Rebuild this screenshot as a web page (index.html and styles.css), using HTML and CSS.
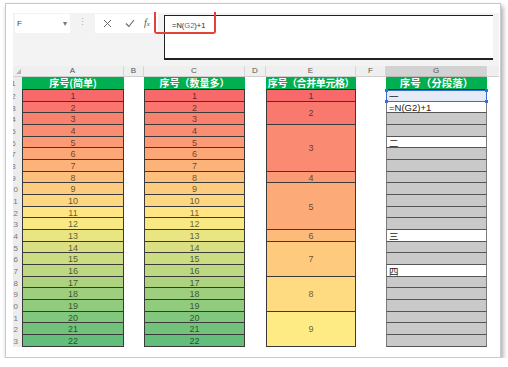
FILE: index.html
```html
<!DOCTYPE html>
<html lang="zh-CN">
<head>
    <meta charset="UTF-8">
    <title>序号</title>
    <link rel="stylesheet" href="styles.css">
</head>
<body>
<div class="frame">
    <div class="toolbar">
        <div class="name-box"><span>F</span><span class="drop">▾</span></div>
        <div class="grip">⋮</div>
        <div class="fx-box">
            <svg class="btn" width="9" height="9" viewBox="0 0 9 9"><path d="M1 1 L8 8 M8 1 L1 8" stroke="#666" stroke-width="1" fill="none"/></svg>
            <svg class="btn" width="10" height="9" viewBox="0 0 10 9"><path d="M1 4.5 L3.8 7.5 L9 1" stroke="#666" stroke-width="1.1" fill="none"/></svg>
            <span class="fx">f<span class="x">x</span></span>
        </div>
        <div class="formula">=N(<span class="ref">G2</span>)+1</div>
        <div class="mark"></div>
    </div>

    <div class="sheet">
        <div class="col rowhdr">
            <div class="hdr corner"><span class="tri"></span></div>
            <div class="rh first"><span>1</span></div>
            <div class="rh"><span>2</span></div>
            <div class="rh"><span>3</span></div>
            <div class="rh"><span>4</span></div>
            <div class="rh"><span>5</span></div>
            <div class="rh"><span>6</span></div>
            <div class="rh"><span>7</span></div>
            <div class="rh"><span>8</span></div>
            <div class="rh"><span>9</span></div>
            <div class="rh"><span>10</span></div>
            <div class="rh"><span>11</span></div>
            <div class="rh"><span>12</span></div>
            <div class="rh"><span>13</span></div>
            <div class="rh"><span>14</span></div>
            <div class="rh"><span>15</span></div>
            <div class="rh"><span>16</span></div>
            <div class="rh"><span>17</span></div>
            <div class="rh"><span>18</span></div>
            <div class="rh"><span>19</span></div>
            <div class="rh"><span>20</span></div>
            <div class="rh"><span>21</span></div>
            <div class="rh"><span>22</span></div>
            <div class="rh"><span>23</span></div>
        </div>

        <div class="col col-a">
            <div class="hdr">A</div>
            <div class="title">序号(简单)</div>
            <div class="c" style="background:#f8696b">1</div>
            <div class="c" style="background:#f9756d">2</div>
            <div class="c" style="background:#f9826f">3</div>
            <div class="c" style="background:#fa8e72">4</div>
            <div class="c" style="background:#fb9a74">5</div>
            <div class="c" style="background:#fba777">6</div>
            <div class="c" style="background:#fcb379">7</div>
            <div class="c" style="background:#fdc07c">8</div>
            <div class="c" style="background:#fdcc7e">9</div>
            <div class="c" style="background:#fed880">10</div>
            <div class="c" style="background:#ffe583">11</div>
            <div class="c" style="background:#f8e983">12</div>
            <div class="c" style="background:#e9e583">13</div>
            <div class="c" style="background:#dae082">14</div>
            <div class="c" style="background:#cbdc81">15</div>
            <div class="c" style="background:#bcd880">16</div>
            <div class="c" style="background:#add37f">17</div>
            <div class="c" style="background:#9ecf7e">18</div>
            <div class="c" style="background:#90cb7e">19</div>
            <div class="c" style="background:#81c77d">20</div>
            <div class="c" style="background:#72c27c">21</div>
            <div class="c" style="background:#63be7b">22</div>
        </div>

        <div class="col col-b">
            <div class="hdr">B</div>
        </div>

        <div class="col col-c">
            <div class="hdr">C</div>
            <div class="title">序号（数量多）</div>
            <div class="c" style="background:#f8696b">1</div>
            <div class="c" style="background:#f9756d">2</div>
            <div class="c" style="background:#f9826f">3</div>
            <div class="c" style="background:#fa8e72">4</div>
            <div class="c" style="background:#fb9a74">5</div>
            <div class="c" style="background:#fba777">6</div>
            <div class="c" style="background:#fcb379">7</div>
            <div class="c" style="background:#fdc07c">8</div>
            <div class="c" style="background:#fdcc7e">9</div>
            <div class="c" style="background:#fed880">10</div>
            <div class="c" style="background:#ffe583">11</div>
            <div class="c" style="background:#f8e983">12</div>
            <div class="c" style="background:#e9e583">13</div>
            <div class="c" style="background:#dae082">14</div>
            <div class="c" style="background:#cbdc81">15</div>
            <div class="c" style="background:#bcd880">16</div>
            <div class="c" style="background:#add37f">17</div>
            <div class="c" style="background:#9ecf7e">18</div>
            <div class="c" style="background:#90cb7e">19</div>
            <div class="c" style="background:#81c77d">20</div>
            <div class="c" style="background:#72c27c">21</div>
            <div class="c" style="background:#63be7b">22</div>
        </div>

        <div class="col col-d">
            <div class="hdr">D</div>
        </div>

        <div class="col col-e">
            <div class="hdr">E</div>
            <div class="title">序号（合并单元格）</div>
            <div class="c" style="background:#f8696b">1</div>
            <div class="c r2" style="background:#f9796e">2</div>
            <div class="c r4" style="background:#fa8a71">3</div>
            <div class="c" style="background:#fb9a74">4</div>
            <div class="c r4" style="background:#fcaa78">5</div>
            <div class="c" style="background:#fcba7b">6</div>
            <div class="c r3" style="background:#fdca7e">7</div>
            <div class="c r3" style="background:#fedb81">8</div>
            <div class="c r3" style="background:#ffeb84">9</div>
        </div>

        <div class="col col-f">
            <div class="hdr">F</div>
        </div>

        <div class="col col-g">
            <div class="hdr sel">G</div>
            <div class="title">序号（分段落）</div>
            <div class="c txt active">一<i class="h tl"></i><i class="h tr"></i><i class="h bl"></i><i class="h br"></i></div>
            <div class="c txt white">=N(G2)+1</div>
            <div class="c gray"></div>
            <div class="c gray"></div>
            <div class="c txt white">二</div>
            <div class="c gray"></div>
            <div class="c gray"></div>
            <div class="c gray"></div>
            <div class="c gray"></div>
            <div class="c gray"></div>
            <div class="c gray"></div>
            <div class="c gray"></div>
            <div class="c txt white">三</div>
            <div class="c gray"></div>
            <div class="c gray"></div>
            <div class="c txt white">四</div>
            <div class="c gray"></div>
            <div class="c gray"></div>
            <div class="c gray"></div>
            <div class="c gray"></div>
            <div class="c gray"></div>
            <div class="c gray"></div>
        </div>

        <div class="col col-rest">
            <div class="hdr"></div>
        </div>
    </div>
</div>
</body>
</html>
```

FILE: styles.css
```css
:root {
    --row: 11.68px;
}
body {
    margin: 0;
    background: #fff;
    font-family: "Liberation Sans", "Noto Sans CJK SC", sans-serif;
    color: #222;
}
.frame {
    margin: 3px 0 0 5px;
    width: 496px;
    height: 355px;
    box-sizing: border-box;
    border: 1px solid #c9c9c9;
    box-shadow: 2px 3px 5px rgba(0, 0, 0, 0.35);
    padding: 9px 1px 0 7px;
    background: #fff;
}

/* toolbar / formula bar */
.toolbar {
    position: relative;
    display: flex;
    align-items: flex-start;
    height: 53px;
    background: #f3f3f3;
}
.name-box {
    display: flex;
    align-items: center;
    justify-content: space-between;
    margin: 1px 0 0 2px;
    width: 55px;
    height: 19px;
    box-sizing: border-box;
    padding: 0 3px 0 2px;
    background: #fff;
    font-size: 8px;
    color: #444;
}
.name-box .drop {
    font-size: 8px;
    color: #777;
}
.grip {
    margin: 5px 0 0 8px;
    font-size: 9px;
    line-height: 9px;
    color: #aaa;
}
.fx-box {
    display: flex;
    align-items: center;
    margin: 1px 0 0 8px;
    width: 63px;
    height: 19px;
    background: #fff;
}
.fx-box .btn {
    margin-left: 8px;
}
.fx-box .btn + .btn {
    margin-left: 13px;
}
.fx {
    margin-left: 9px;
    font-family: "Liberation Serif", serif;
    font-style: italic;
    font-size: 10px;
    line-height: 10px;
    color: #555;
}
.fx .x {
    font-size: 7px;
}
.formula {
    flex: 1;
    margin: 2px 6px 0 6px;
    height: 45px;
    box-sizing: border-box;
    border-top: 1px solid #222;
    border-bottom: 2px solid #222;
    border-left: 1px solid #222;
    padding: 5px 0 0 7px;
    background: #fff;
    font-size: 7.5px;
    color: #222;
}
.formula .ref {
    color: #3a6fd0;
}
.mark {
    position: absolute;
    left: 141px;
    top: -1px;
    width: 62px;
    height: 22px;
    box-sizing: border-box;
    border: 2px solid #e5413b;
    border-top: none;
    border-radius: 0 0 3px 3px;
}

/* sheet */
.sheet {
    display: flex;
}
.col {
    display: flex;
    flex-direction: column;
}
.rowhdr { width: 9px; }
.col-a { width: 102px; }
.col-b { width: 20px; }
.col-c { width: 101px; }
.col-d { width: 21px; }
.col-e { width: 90px; }
.col-f { width: 30px; }
.col-g { width: 101px; }
.col-rest { flex: 1; }

.hdr {
    height: 11px;
    box-sizing: border-box;
    background: #efefef;
    border-right: 1px solid #d6d6d6;
    border-bottom: 1px solid #cfcfcf;
    font-size: 8px;
    line-height: 10px;
    text-align: center;
    color: #555;
}
.hdr.sel {
    background: #d2d2d2;
    border-bottom-color: #b9b9b9;
}
.col-rest .hdr {
    border-right: none;
}
.corner {
    position: relative;
    border-right: none;
}
.tri {
    position: absolute;
    right: 1px;
    bottom: 2px;
    width: 0;
    height: 0;
    border-left: 5px solid transparent;
    border-bottom: 5px solid #b5b5b5;
}
.rh {
    height: var(--row);
    overflow: hidden;
    background: #ececec;
    font-size: 8px;
    color: #777;
}
.rh.first {
    height: 13px;
}
.rh span {
    display: block;
    width: 20px;
    margin-left: -9.5px;
    text-align: center;
    line-height: 13px;
}

.title {
    height: 13px;
    box-sizing: border-box;
    background: #00b050;
    border-bottom: 1px solid #2e2e2e;
    color: #fff;
    font-family: "Noto Sans CJK SC", sans-serif;
    font-weight: bold;
    font-size: 10px;
    line-height: 12px;
    text-align: center;
    white-space: nowrap;
    overflow: hidden;
}
.col-e .title {
    letter-spacing: -0.4px;
}
.col-g .title {
    font-size: 10.5px;
}

.c {
    display: flex;
    align-items: center;
    justify-content: center;
    height: var(--row);
    box-sizing: border-box;
    padding-top: 1px;
    border-left: 1px solid #3a3a3a;
    border-right: 1px solid #3a3a3a;
    border-bottom: 1px solid #3a3a3a;
    font-size: 9px;
    color: rgba(0, 0, 0, 0.62);
}
.r2 { height: calc(var(--row) * 2); }
.r3 { height: calc(var(--row) * 3); }
.r4 { height: calc(var(--row) * 4); }

.col-g .c {
    border-left-color: #7a7a7a;
    border-right-color: #7a7a7a;
    border-bottom-color: #555;
}
.c.gray {
    background: #c9c9c9;
}
.c.white {
    background: #fff;
}
.c.txt {
    justify-content: flex-start;
    padding-left: 2px;
    font-size: 9.5px;
    color: #222;
}
.c.active {
    position: relative;
    background: #e4ebf7;
    border: 1px solid #3a6fd0;
}
.h {
    position: absolute;
    width: 3px;
    height: 3px;
    background: #3a6fd0;
}
.h.tl { left: -2px; top: -2px; }
.h.tr { right: -2px; top: -2px; }
.h.bl { left: -2px; bottom: -2px; }
.h.br { right: -2px; bottom: -2px; }
```
